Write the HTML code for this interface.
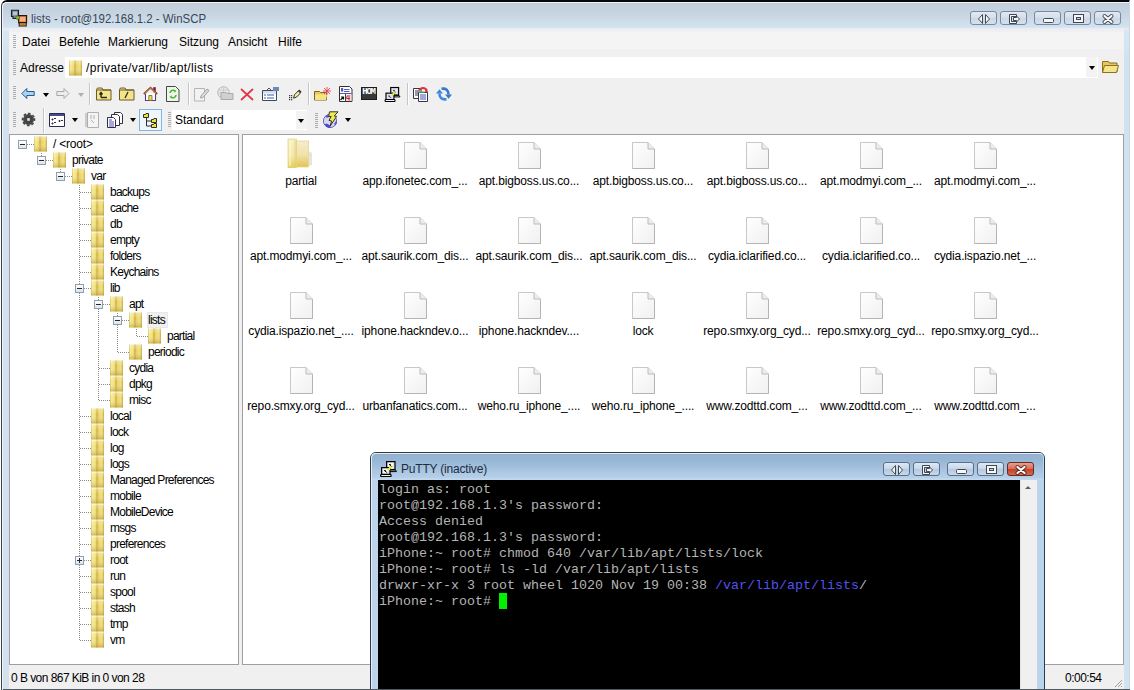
<!DOCTYPE html>
<html><head><meta charset="utf-8">
<style>
*{margin:0;padding:0;box-sizing:border-box}
html,body{width:1134px;height:690px;overflow:hidden;background:#fff;font-family:"Liberation Sans",sans-serif;font-size:12px;color:#000}
.a{position:absolute}
.t{position:absolute;white-space:nowrap;line-height:14px}
#win{position:absolute;left:1px;top:0;width:1129px;height:692px;border:1px solid #39404a;border-top:2px solid #0a0a0a;border-radius:6px 6px 0 0;background:linear-gradient(#c3d0de,#d2e0ee 24px,#cfdded 60px,#cddcec);overflow:hidden}
.grip{position:absolute;width:3px;background:repeating-linear-gradient(#acacac 0 1px,transparent 1px 2px)}
.sep{position:absolute;width:2px;border-left:1px solid #c5c5c5;border-right:1px solid #fff}
.dd{position:absolute;width:0;height:0;border-left:3px solid transparent;border-right:3px solid transparent;border-top:3px solid #000}
.tb{position:absolute;width:27px;height:14px;border:1px solid #7888a0;border-radius:3px;background:linear-gradient(#e2e9f2,#d4deea 50%,#cbd7e5 51%,#d6e1ed)}
.tree .r{position:absolute;height:16px}
.fold{position:absolute;width:13px;height:16px}
.box{position:absolute;width:9px;height:9px;border:1px solid #919eae;background:linear-gradient(#fff,#dfe3e8)}
.plus:before{content:"";position:absolute;left:3px;top:1px;width:1px;height:5px;background:#1c2a3a}
.box:after{content:"";position:absolute;left:1px;top:3px;width:5px;height:1px;background:#1c2a3a}
.vd{position:absolute;width:1px;background:repeating-linear-gradient(#8a8a8a 0 1px,transparent 1px 2px)}
.hd{position:absolute;height:1px;background:repeating-linear-gradient(90deg,#8a8a8a 0 1px,transparent 1px 2px)}
.fi{position:absolute;width:114px;height:75px}
.fi .lb{position:absolute;left:0;width:114px;top:39px;text-align:center;line-height:14px;white-space:nowrap;color:#000}
.term{position:absolute;font-family:"Liberation Mono",monospace;font-size:13.333px;line-height:16px;color:#b4b4b4;white-space:pre}
.tt{letter-spacing:-0.75px}
</style></head><body>
<svg width="0" height="0" style="position:absolute">
<defs>
<linearGradient id="gh" x1="0" x2="1" y1="0" y2="0"><stop offset="0" stop-color="#d4bc50"/><stop offset="0.12" stop-color="#f6ec98"/><stop offset="0.36" stop-color="#eedb70"/><stop offset="0.46" stop-color="#c8a83c"/><stop offset="0.56" stop-color="#e8d264"/><stop offset="0.85" stop-color="#f0e080"/><stop offset="1" stop-color="#c4a238"/></linearGradient>
<linearGradient id="gv" x1="0" x2="0" y1="0" y2="1"><stop offset="0" stop-color="#fff" stop-opacity="0.35"/><stop offset="0.4" stop-color="#fff" stop-opacity="0"/><stop offset="1" stop-color="#a88010" stop-opacity="0.45"/></linearGradient>
<linearGradient id="gf1" x1="0" x2="0" y1="0" y2="1"><stop offset="0" stop-color="#f8f2c8"/><stop offset="0.6" stop-color="#f4e8a8"/><stop offset="1" stop-color="#e6cc58"/></linearGradient>
<linearGradient id="gf2" x1="0" x2="0" y1="0" y2="1"><stop offset="0" stop-color="#f6eccc"/><stop offset="0.55" stop-color="#f0e2a8"/><stop offset="1" stop-color="#e2c450"/></linearGradient>
<linearGradient id="gdoc" x1="0" x2="1" y1="0" y2="1"><stop offset="0" stop-color="#ffffff"/><stop offset="1" stop-color="#f0f0f0"/></linearGradient>
<symbol id="fs" viewBox="0 0 13 15">
<rect x="0" y="0" width="13" height="15" fill="url(#gh)"/>
<rect x="0" y="0" width="13" height="15" fill="url(#gv)"/>
</symbol>
<symbol id="fb" viewBox="0 0 26 30">
<path d="M22 13l3 2v12l-3 1z" fill="#e4e4e4"/>
<path d="M9 3h12.5v26H9z" fill="url(#gf2)" stroke="#e6d48a" stroke-width="0.8"/>
<path d="M1 1h8.5v29H1z" fill="url(#gf1)" stroke="#e4d07c" stroke-width="0.8"/>
<path d="M3 3v25" stroke="#fbf6d8" stroke-width="1.2"/>
<path d="M8 2v27" stroke="#e0c868" stroke-width="0.8"/>
</symbol>
<symbol id="doc" viewBox="0 0 23 27">
<path d="M0.5 0.5h15.5l6.5 6.5v19.5h-22z" fill="url(#gdoc)" stroke="#c8c8c8"/>
<path d="M22.5 7.5v19h-22" fill="none" stroke="#b4b4b4"/>
<path d="M16 0.5v6.5h6.5" fill="#ececec" stroke="#bcbcbc"/>
</symbol>
</defs>
</svg>

<!-- frame -->
<div class="a" style="left:1px;top:0;width:1129px;height:700px;border:1px solid #3a424c;border-right:1px solid #c8d8ea;border-top:2px solid #080808;border-radius:6px 0 0 0;background:#d3e1ef"></div>
<div class="a" style="left:2px;top:2px;width:1127px;height:700px;border:1px solid #eef3f8;border-bottom:0;border-right:0;border-radius:5px 0 0 0;background:linear-gradient(#c5ccd4 0px,#c2cfdd 2px,#c6d4e2 10px,#d3e2ef 24px,#e6edf4 26px,#d9e6f3 28px,#d3e1ef 60px)"></div>
<!-- client -->
<div class="a" style="left:9px;top:29px;width:1115px;height:660px;background:#f0f0f0"></div>
<div class="a" style="left:9px;top:28px;width:1115px;height:2px;background:#e9eef4"></div>
<div class="a" style="left:10px;top:32px;width:1113px;height:17px;background:#f4f4f5"></div>
<!-- bottom border -->
<div class="a" style="left:3px;top:689px;width:1127px;height:1px;background:#4a5058"></div>
<!-- title -->
<div class="t" style="left:31px;top:11px;color:#3a4654;font-size:13px;line-height:16px;transform:scaleX(0.88);transform-origin:0 0">lists - root@192.168.1.2 - WinSCP</div>
<!-- title buttons -->
<div class="tb" style="left:970px;top:11px"></div>
<div class="tb" style="left:1000px;top:11px"></div>
<div class="tb" style="left:1034px;top:11px"></div>
<div class="tb" style="left:1064px;top:11px"></div>
<div class="tb" style="left:1094px;top:11px"></div>
<!-- menu -->
<div class="grip" style="left:13px;top:35px;height:13px"></div>
<div class="t" style="left:22px;top:35px">Datei</div>
<div class="t" style="left:59px;top:35px">Befehle</div>
<div class="t" style="left:108px;top:35px">Markierung</div>
<div class="t" style="left:179px;top:35px">Sitzung</div>
<div class="t" style="left:228px;top:35px">Ansicht</div>
<div class="t" style="left:278px;top:35px">Hilfe</div>
<!-- address -->
<div class="grip" style="left:13px;top:60px;height:15px"></div>
<div class="t" style="left:20px;top:61px">Adresse</div>
<div class="a" style="left:65px;top:57px;width:1033px;height:21px;background:#fff"></div>
<div class="a" style="left:1086px;top:57px;width:11px;height:20px;background:#f3f3f3"></div>
<div class="dd" style="left:1089px;top:66px;border-width:4px 3px 0 3px"></div>
<div class="t" style="left:86px;top:61px;letter-spacing:0.33px">/private/var/lib/apt/lists</div>
<!-- toolbar grips -->
<div class="grip" style="left:13px;top:86px;height:14px"></div>
<div class="grip" style="left:13px;top:112px;height:16px"></div>
<div class="sep" style="left:89px;top:83px;height:22px"></div>
<div class="sep" style="left:188px;top:83px;height:22px"></div>
<div class="sep" style="left:308px;top:83px;height:22px"></div>
<div class="sep" style="left:407px;top:83px;height:22px"></div>
<div class="sep" style="left:43px;top:108px;height:25px"></div>
<div class="dd" style="left:43px;top:93px;border-width:4px 3px 0 3px"></div>
<div class="dd" style="left:78px;top:93px;border-width:4px 3px 0 3px;border-top-color:#b0b0b0"></div>
<div class="dd" style="left:72px;top:118px;border-width:4px 3px 0 3px"></div>
<div class="dd" style="left:130px;top:118px;border-width:4px 3px 0 3px"></div>
<div class="dd" style="left:345px;top:118px;border-width:4px 3px 0 3px"></div>
<div class="a" style="left:139px;top:109px;width:23px;height:22px;border:1px solid #7eb4ea;background:#eef5fb"></div>
<div class="grip" style="left:168px;top:112px;height:16px"></div>
<div class="a" style="left:172px;top:110px;width:135px;height:20px;background:#fff"></div>
<div class="a" style="left:296px;top:111px;width:11px;height:18px;background:#f3f3f3"></div>
<div class="dd" style="left:298px;top:119px;border-width:4px 3px 0 3px"></div>
<div class="t" style="left:175px;top:113px">Standard</div>
<div class="grip" style="left:315px;top:113px;height:16px"></div>
<!-- panels -->
<div class="a" style="left:9px;top:134px;width:230px;height:531px;border:1px solid #9c9fa4;background:#fff"></div>
<div class="a" style="left:242px;top:134px;width:882px;height:531px;border:1px solid #9c9fa4;background:#fff"></div>
<!-- status -->
<div class="t" style="left:11px;top:671px;letter-spacing:-0.55px">0 B von 867 KiB in 0 von 28</div>
<div class="t" style="left:1065px;top:671px;letter-spacing:-0.5px">0:00:54</div>

<div class="vd" style="left:41px;top:153px;height:8px"></div>
<div class="vd" style="left:60px;top:169px;height:8px"></div>
<div class="vd" style="left:79px;top:185px;height:456px"></div>
<div class="vd" style="left:98px;top:297px;height:104px"></div>
<div class="vd" style="left:117px;top:313px;height:40px"></div>
<div class="vd" style="left:136px;top:329px;height:8px"></div>
<div class="hd" style="left:27px;top:144px;width:7px"></div>
<div class="box" style="left:18px;top:140px"></div>
<svg class="fold" style="left:34px;top:136px" width="13" height="15"><use href="#fs"/></svg>
<div class="t tt" style="left:53px;top:137px;letter-spacing:-0.2px">/ &lt;root&gt;</div>
<div class="hd" style="left:46px;top:160px;width:7px"></div>
<div class="box" style="left:37px;top:156px"></div>
<svg class="fold" style="left:53px;top:152px" width="13" height="15"><use href="#fs"/></svg>
<div class="t tt" style="left:72px;top:153px">private</div>
<div class="hd" style="left:65px;top:176px;width:7px"></div>
<div class="box" style="left:56px;top:172px"></div>
<svg class="fold" style="left:72px;top:168px" width="13" height="15"><use href="#fs"/></svg>
<div class="t tt" style="left:91px;top:169px">var</div>
<div class="hd" style="left:80px;top:192px;width:11px"></div>
<svg class="fold" style="left:91px;top:184px" width="13" height="15"><use href="#fs"/></svg>
<div class="t tt" style="left:110px;top:185px">backups</div>
<div class="hd" style="left:80px;top:208px;width:11px"></div>
<svg class="fold" style="left:91px;top:200px" width="13" height="15"><use href="#fs"/></svg>
<div class="t tt" style="left:110px;top:201px">cache</div>
<div class="hd" style="left:80px;top:224px;width:11px"></div>
<svg class="fold" style="left:91px;top:216px" width="13" height="15"><use href="#fs"/></svg>
<div class="t tt" style="left:110px;top:217px">db</div>
<div class="hd" style="left:80px;top:240px;width:11px"></div>
<svg class="fold" style="left:91px;top:232px" width="13" height="15"><use href="#fs"/></svg>
<div class="t tt" style="left:110px;top:233px">empty</div>
<div class="hd" style="left:80px;top:256px;width:11px"></div>
<svg class="fold" style="left:91px;top:248px" width="13" height="15"><use href="#fs"/></svg>
<div class="t tt" style="left:110px;top:249px">folders</div>
<div class="hd" style="left:80px;top:272px;width:11px"></div>
<svg class="fold" style="left:91px;top:264px" width="13" height="15"><use href="#fs"/></svg>
<div class="t tt" style="left:110px;top:265px">Keychains</div>
<div class="hd" style="left:84px;top:288px;width:7px"></div>
<div class="box" style="left:75px;top:284px"></div>
<svg class="fold" style="left:91px;top:280px" width="13" height="15"><use href="#fs"/></svg>
<div class="t tt" style="left:110px;top:281px">lib</div>
<div class="hd" style="left:103px;top:304px;width:7px"></div>
<div class="box" style="left:94px;top:300px"></div>
<svg class="fold" style="left:110px;top:296px" width="13" height="15"><use href="#fs"/></svg>
<div class="t tt" style="left:129px;top:297px">apt</div>
<div class="hd" style="left:122px;top:320px;width:7px"></div>
<div class="box" style="left:113px;top:316px"></div>
<svg class="fold" style="left:129px;top:312px" width="13" height="15"><use href="#fs"/></svg>
<div class="a" style="left:147px;top:312px;width:21px;height:16px;background:#f0f0f0;border:1px solid #e8e8e8"></div>
<div class="t tt" style="left:148px;top:313px">lists</div>
<div class="hd" style="left:137px;top:336px;width:11px"></div>
<svg class="fold" style="left:148px;top:328px" width="13" height="15"><use href="#fs"/></svg>
<div class="t tt" style="left:167px;top:329px">partial</div>
<div class="hd" style="left:118px;top:352px;width:11px"></div>
<svg class="fold" style="left:129px;top:344px" width="13" height="15"><use href="#fs"/></svg>
<div class="t tt" style="left:148px;top:345px">periodic</div>
<div class="hd" style="left:99px;top:368px;width:11px"></div>
<svg class="fold" style="left:110px;top:360px" width="13" height="15"><use href="#fs"/></svg>
<div class="t tt" style="left:129px;top:361px">cydia</div>
<div class="hd" style="left:99px;top:384px;width:11px"></div>
<svg class="fold" style="left:110px;top:376px" width="13" height="15"><use href="#fs"/></svg>
<div class="t tt" style="left:129px;top:377px">dpkg</div>
<div class="hd" style="left:99px;top:400px;width:11px"></div>
<svg class="fold" style="left:110px;top:392px" width="13" height="15"><use href="#fs"/></svg>
<div class="t tt" style="left:129px;top:393px">misc</div>
<div class="hd" style="left:80px;top:416px;width:11px"></div>
<svg class="fold" style="left:91px;top:408px" width="13" height="15"><use href="#fs"/></svg>
<div class="t tt" style="left:110px;top:409px">local</div>
<div class="hd" style="left:80px;top:432px;width:11px"></div>
<svg class="fold" style="left:91px;top:424px" width="13" height="15"><use href="#fs"/></svg>
<div class="t tt" style="left:110px;top:425px">lock</div>
<div class="hd" style="left:80px;top:448px;width:11px"></div>
<svg class="fold" style="left:91px;top:440px" width="13" height="15"><use href="#fs"/></svg>
<div class="t tt" style="left:110px;top:441px">log</div>
<div class="hd" style="left:80px;top:464px;width:11px"></div>
<svg class="fold" style="left:91px;top:456px" width="13" height="15"><use href="#fs"/></svg>
<div class="t tt" style="left:110px;top:457px">logs</div>
<div class="hd" style="left:80px;top:480px;width:11px"></div>
<svg class="fold" style="left:91px;top:472px" width="13" height="15"><use href="#fs"/></svg>
<div class="t tt" style="left:110px;top:473px">Managed Preferences</div>
<div class="hd" style="left:80px;top:496px;width:11px"></div>
<svg class="fold" style="left:91px;top:488px" width="13" height="15"><use href="#fs"/></svg>
<div class="t tt" style="left:110px;top:489px">mobile</div>
<div class="hd" style="left:80px;top:512px;width:11px"></div>
<svg class="fold" style="left:91px;top:504px" width="13" height="15"><use href="#fs"/></svg>
<div class="t tt" style="left:110px;top:505px">MobileDevice</div>
<div class="hd" style="left:80px;top:528px;width:11px"></div>
<svg class="fold" style="left:91px;top:520px" width="13" height="15"><use href="#fs"/></svg>
<div class="t tt" style="left:110px;top:521px">msgs</div>
<div class="hd" style="left:80px;top:544px;width:11px"></div>
<svg class="fold" style="left:91px;top:536px" width="13" height="15"><use href="#fs"/></svg>
<div class="t tt" style="left:110px;top:537px">preferences</div>
<div class="hd" style="left:84px;top:560px;width:7px"></div>
<div class="box plus" style="left:75px;top:556px"></div>
<svg class="fold" style="left:91px;top:552px" width="13" height="15"><use href="#fs"/></svg>
<div class="t tt" style="left:110px;top:553px">root</div>
<div class="hd" style="left:80px;top:576px;width:11px"></div>
<svg class="fold" style="left:91px;top:568px" width="13" height="15"><use href="#fs"/></svg>
<div class="t tt" style="left:110px;top:569px">run</div>
<div class="hd" style="left:80px;top:592px;width:11px"></div>
<svg class="fold" style="left:91px;top:584px" width="13" height="15"><use href="#fs"/></svg>
<div class="t tt" style="left:110px;top:585px">spool</div>
<div class="hd" style="left:80px;top:608px;width:11px"></div>
<svg class="fold" style="left:91px;top:600px" width="13" height="15"><use href="#fs"/></svg>
<div class="t tt" style="left:110px;top:601px">stash</div>
<div class="hd" style="left:80px;top:624px;width:11px"></div>
<svg class="fold" style="left:91px;top:616px" width="13" height="15"><use href="#fs"/></svg>
<div class="t tt" style="left:110px;top:617px">tmp</div>
<div class="hd" style="left:80px;top:640px;width:11px"></div>
<svg class="fold" style="left:91px;top:632px" width="13" height="15"><use href="#fs"/></svg>
<div class="t tt" style="left:110px;top:633px">vm</div>
<svg class="a" style="left:287px;top:138px" width="26" height="30"><use href="#fb"/></svg>
<div class="t" style="left:244px;top:174px;width:114px;text-align:center;letter-spacing:-0.15px">partial</div>
<svg class="a" style="left:404px;top:142px" width="23" height="27"><use href="#doc"/></svg>
<div class="t" style="left:358px;top:174px;width:114px;text-align:center;letter-spacing:-0.15px">app.ifonetec.com_...</div>
<svg class="a" style="left:518px;top:142px" width="23" height="27"><use href="#doc"/></svg>
<div class="t" style="left:472px;top:174px;width:114px;text-align:center;letter-spacing:-0.15px">apt.bigboss.us.co...</div>
<svg class="a" style="left:632px;top:142px" width="23" height="27"><use href="#doc"/></svg>
<div class="t" style="left:586px;top:174px;width:114px;text-align:center;letter-spacing:-0.15px">apt.bigboss.us.co...</div>
<svg class="a" style="left:746px;top:142px" width="23" height="27"><use href="#doc"/></svg>
<div class="t" style="left:700px;top:174px;width:114px;text-align:center;letter-spacing:-0.15px">apt.bigboss.us.co...</div>
<svg class="a" style="left:860px;top:142px" width="23" height="27"><use href="#doc"/></svg>
<div class="t" style="left:814px;top:174px;width:114px;text-align:center;letter-spacing:-0.15px">apt.modmyi.com_...</div>
<svg class="a" style="left:974px;top:142px" width="23" height="27"><use href="#doc"/></svg>
<div class="t" style="left:928px;top:174px;width:114px;text-align:center;letter-spacing:-0.15px">apt.modmyi.com_...</div>
<svg class="a" style="left:290px;top:217px" width="23" height="27"><use href="#doc"/></svg>
<div class="t" style="left:244px;top:249px;width:114px;text-align:center;letter-spacing:-0.15px">apt.modmyi.com_...</div>
<svg class="a" style="left:404px;top:217px" width="23" height="27"><use href="#doc"/></svg>
<div class="t" style="left:358px;top:249px;width:114px;text-align:center;letter-spacing:-0.15px">apt.saurik.com_dis...</div>
<svg class="a" style="left:518px;top:217px" width="23" height="27"><use href="#doc"/></svg>
<div class="t" style="left:472px;top:249px;width:114px;text-align:center;letter-spacing:-0.15px">apt.saurik.com_dis...</div>
<svg class="a" style="left:632px;top:217px" width="23" height="27"><use href="#doc"/></svg>
<div class="t" style="left:586px;top:249px;width:114px;text-align:center;letter-spacing:-0.15px">apt.saurik.com_dis...</div>
<svg class="a" style="left:746px;top:217px" width="23" height="27"><use href="#doc"/></svg>
<div class="t" style="left:700px;top:249px;width:114px;text-align:center;letter-spacing:-0.15px">cydia.iclarified.co...</div>
<svg class="a" style="left:860px;top:217px" width="23" height="27"><use href="#doc"/></svg>
<div class="t" style="left:814px;top:249px;width:114px;text-align:center;letter-spacing:-0.15px">cydia.iclarified.co...</div>
<svg class="a" style="left:974px;top:217px" width="23" height="27"><use href="#doc"/></svg>
<div class="t" style="left:928px;top:249px;width:114px;text-align:center;letter-spacing:-0.15px">cydia.ispazio.net_...</div>
<svg class="a" style="left:290px;top:292px" width="23" height="27"><use href="#doc"/></svg>
<div class="t" style="left:244px;top:324px;width:114px;text-align:center;letter-spacing:-0.15px">cydia.ispazio.net_....</div>
<svg class="a" style="left:404px;top:292px" width="23" height="27"><use href="#doc"/></svg>
<div class="t" style="left:358px;top:324px;width:114px;text-align:center;letter-spacing:-0.15px">iphone.hackndev.o...</div>
<svg class="a" style="left:518px;top:292px" width="23" height="27"><use href="#doc"/></svg>
<div class="t" style="left:472px;top:324px;width:114px;text-align:center;letter-spacing:-0.15px">iphone.hackndev....</div>
<svg class="a" style="left:632px;top:292px" width="23" height="27"><use href="#doc"/></svg>
<div class="t" style="left:586px;top:324px;width:114px;text-align:center;letter-spacing:-0.15px">lock</div>
<svg class="a" style="left:746px;top:292px" width="23" height="27"><use href="#doc"/></svg>
<div class="t" style="left:700px;top:324px;width:114px;text-align:center;letter-spacing:-0.15px">repo.smxy.org_cyd...</div>
<svg class="a" style="left:860px;top:292px" width="23" height="27"><use href="#doc"/></svg>
<div class="t" style="left:814px;top:324px;width:114px;text-align:center;letter-spacing:-0.15px">repo.smxy.org_cyd...</div>
<svg class="a" style="left:974px;top:292px" width="23" height="27"><use href="#doc"/></svg>
<div class="t" style="left:928px;top:324px;width:114px;text-align:center;letter-spacing:-0.15px">repo.smxy.org_cyd...</div>
<svg class="a" style="left:290px;top:367px" width="23" height="27"><use href="#doc"/></svg>
<div class="t" style="left:244px;top:399px;width:114px;text-align:center;letter-spacing:-0.15px">repo.smxy.org_cyd...</div>
<svg class="a" style="left:404px;top:367px" width="23" height="27"><use href="#doc"/></svg>
<div class="t" style="left:358px;top:399px;width:114px;text-align:center;letter-spacing:-0.15px">urbanfanatics.com...</div>
<svg class="a" style="left:518px;top:367px" width="23" height="27"><use href="#doc"/></svg>
<div class="t" style="left:472px;top:399px;width:114px;text-align:center;letter-spacing:-0.15px">weho.ru_iphone_....</div>
<svg class="a" style="left:632px;top:367px" width="23" height="27"><use href="#doc"/></svg>
<div class="t" style="left:586px;top:399px;width:114px;text-align:center;letter-spacing:-0.15px">weho.ru_iphone_....</div>
<svg class="a" style="left:746px;top:367px" width="23" height="27"><use href="#doc"/></svg>
<div class="t" style="left:700px;top:399px;width:114px;text-align:center;letter-spacing:-0.15px">www.zodttd.com_...</div>
<svg class="a" style="left:860px;top:367px" width="23" height="27"><use href="#doc"/></svg>
<div class="t" style="left:814px;top:399px;width:114px;text-align:center;letter-spacing:-0.15px">www.zodttd.com_...</div>
<svg class="a" style="left:974px;top:367px" width="23" height="27"><use href="#doc"/></svg>
<div class="t" style="left:928px;top:399px;width:114px;text-align:center;letter-spacing:-0.15px">www.zodttd.com_...</div>
<!-- winscp title icon -->
<svg class="a" style="left:10px;top:9px" width="18" height="18" viewBox="0 0 18 18">
<path d="M1.5 1.2h7v6.3h-1.5v2h-4v-2H1.5z" fill="#7a8694" stroke="#18202a" stroke-width="1.1"/>
<path d="M3 2.6h4v3.6H3z" fill="#b8c4d0"/>
<path d="M8.6 6.6h8v7h-8z" fill="#e88848" stroke="#2a1406" stroke-width="1.1"/>
<path d="M10 8h5v4.2h-5z" fill="#f4b088"/>
<path d="M9.2 13.6h7v3.4h-7z" fill="#eeb048" stroke="#2a1406" stroke-width="1.1"/>
<path d="M10.5 15.2h4.4" stroke="#8a5010" stroke-width=".8"/>
<circle cx="7.6" cy="8.6" r="1.9" fill="#88b830" stroke="#2a4010" stroke-width=".5"/>
</svg>
<!-- title button glyphs -->
<svg class="a" style="left:970px;top:11px" width="28" height="16" viewBox="0 0 28 16">
<path d="M12.5 3.5l-4 4.5 4 4.5z M15.5 3.5l4 4.5-4 4.5z" fill="#f4f6f8" stroke="#404854"/></svg>
<svg class="a" style="left:1000px;top:11px" width="28" height="16" viewBox="0 0 28 16">
<path d="M9.5 3.5h7v2h-5v5h5v2h-7z" fill="#f4f6f8" stroke="#404854"/><path d="M13.5 6.5h3v-1.5l3 3-3 3v-1.5h-3z" fill="#f4f6f8" stroke="#404854"/></svg>
<svg class="a" style="left:1034px;top:11px" width="28" height="16" viewBox="0 0 28 16">
<rect x="9.5" y="7.5" width="10" height="4" rx="1" fill="#f4f6f8" stroke="#404854"/></svg>
<svg class="a" style="left:1064px;top:11px" width="28" height="16" viewBox="0 0 28 16">
<rect x="9.5" y="3.5" width="10" height="8" fill="#f4f6f8" stroke="#404854"/><rect x="12.5" y="6.5" width="4" height="2" fill="#c8d4e2" stroke="#404854"/></svg>
<svg class="a" style="left:1094px;top:11px" width="28" height="16" viewBox="0 0 28 16">
<path d="M10.5 5l7 6M17.5 5l-7 6" stroke="#404854" stroke-width="4" stroke-linecap="round"/><path d="M10.5 5l7 6M17.5 5l-7 6" stroke="#f8f9fa" stroke-width="2.2" stroke-linecap="round"/></svg>
<!-- address folder -->
<svg class="a" style="left:69px;top:60px" width="13" height="16"><use href="#fs"/></svg>
<!-- address right folder -->
<svg class="a" style="left:1102px;top:59px" width="17" height="14" viewBox="0 0 17 14">
<path d="M0.5 2.5h6l1 1.5h7.5v9h-14.5z" fill="#e7c75a" stroke="#8a7020"/>
<path d="M2.5 6.5h14l-2 7h-14z" fill="#f7e48a" stroke="#8a7020"/></svg>
<!-- back arrow -->
<svg class="a" style="left:21px;top:88px" width="14" height="12" viewBox="0 0 14 12">
<path d="M0.8 5.5l5-5v3h7.4v4h-7.4v3z" fill="#a7d3f4" stroke="#2a5b8c" stroke-linejoin="round"/></svg>
<svg class="a" style="left:56px;top:88px" width="14" height="12" viewBox="0 0 14 12">
<path d="M13 5.5l-5-5v3H0.8v4h7.2v3z" fill="#ececec" stroke="#a8a8a8" stroke-linejoin="round"/></svg>
<!-- parent folder -->
<svg class="a" style="left:96px;top:87px" width="16" height="14" viewBox="0 0 16 14">
<path d="M0.5 2.5v10.5h14.5v-10h-8l-1-2h-4.5z" fill="#f3e48c" stroke="#6a5a28"/>
<path d="M1 3h14" stroke="#6a5a28"/>
<path d="M5 10.5h6M5 10.5v-4.5M3.5 7.5l1.5-2 1.5 2" fill="none" stroke="#2a2a10" stroke-width="1.4"/></svg>
<svg class="a" style="left:119px;top:87px" width="16" height="14" viewBox="0 0 16 14">
<path d="M0.5 2.5v10.5h14.5v-10h-8l-1-2h-4.5z" fill="#f3e48c" stroke="#6a5a28"/>
<path d="M1 3h14" stroke="#6a5a28"/>
<path d="M6 11l3-6" stroke="#2a2a10" stroke-width="1.3"/></svg>
<!-- home -->
<svg class="a" style="left:143px;top:86px" width="15" height="15" viewBox="0 0 15 15">
<path d="M10.2 1.2h2.6v5h-2.6z" fill="#8a1848"/>
<path d="M2.5 7.5v7h10v-7" fill="#fff" stroke="#5a3a7a" stroke-width="1.1"/>
<path d="M0.8 8l6.7-6.3 6.7 6.3" fill="none" stroke="#8a5028" stroke-width="1.9"/>
<path d="M1.8 7.6l5.7-5.3 5.7 5.3" fill="none" stroke="#f0c890" stroke-width=".6"/>
<path d="M5.8 9.5h3.2v5H5.8z" fill="#e8d860" stroke="#6a6a20" stroke-width=".8"/></svg>
<!-- refresh doc -->
<svg class="a" style="left:166px;top:86px" width="14" height="16" viewBox="0 0 14 16">
<path d="M0.5 0.5h9l3.5 3.5v11.5h-12.5z" fill="#eef6e6" stroke="#404848"/>
<path d="M4 7a3 3 0 0 1 5-2M10 9a3 3 0 0 1-5 2" fill="none" stroke="#50b040" stroke-width="1.6"/>
<path d="M8 3.5l2.5 1.5-2 1.8zM6 12.5l-2.5-1.5 2-1.8z" fill="#50b040"/></svg>
<!-- edit grey -->
<svg class="a" style="left:194px;top:86px" width="16" height="16" viewBox="0 0 16 16">
<path d="M0.5 2.5h10v12.5h-10z" fill="#f2f2f2" stroke="#b4b4b4"/>
<path d="M7 10l6-7 2 1.5-6 7-2.5 0.5z" fill="#e0e0e0" stroke="#a0a0a0"/></svg>
<!-- open grey -->
<svg class="a" style="left:217px;top:86px" width="17" height="14" viewBox="0 0 17 14">
<circle cx="6.5" cy="6.5" r="5.8" fill="#e6e6e6" stroke="#b8b8b8"/>
<path d="M2 4h9M1.2 7h10.6M6.5 0.8v11.4" stroke="#c8c8c8" stroke-width=".8"/>
<path d="M4 6.5h5l1 1h6v6h-12z" fill="#d0d0d0" stroke="#aaaaaa"/></svg>
<!-- delete -->
<svg class="a" style="left:240px;top:88px" width="14" height="13" viewBox="0 0 14 13">
<path d="M1 1l12 11M13 1L1 12" stroke="#e0384a" stroke-width="1.8"/></svg>
<!-- properties -->
<svg class="a" style="left:262px;top:86px" width="18" height="15" viewBox="0 0 18 15">
<path d="M0.5 4.5h14v10h-14z" fill="#fff" stroke="#404858"/>
<path d="M1 5h13v2.5H1z" fill="#d8dde8"/>
<path d="M2 9h2M5 9h7M2 12h2M5 12h7" stroke="#3060c0" stroke-width="1.2"/>
<path d="M4 5l3-3 3 3 3-3" fill="none" stroke="#405070"/>
<path d="M11 1h6v4h-6z" fill="#6a8ab8"/></svg>
<!-- rename -->
<svg class="a" style="left:288px;top:88px" width="14" height="13" viewBox="0 0 14 13">
<path d="M1 7h1.2v1.2H1zM3 7h1.2v1.2H3zM1 9h1.2v1.2H1zM3 9h1.2v1.2H3zM1 11h1.2v1.2H1zM3 11h1.2v1.2H3z" fill="#383838"/>
<path d="M5.6 10.2l0.9-3.4 4-4.2 2.2 2.1-4 4.3z" fill="#f6eeb0" stroke="#202010" stroke-width=".9" stroke-linejoin="round"/>
<path d="M9.8 3.2l1.6-1.6 2.2 2.1-1.6 1.6z" fill="#484040"/></svg>
<!-- new folder -->
<svg class="a" style="left:314px;top:86px" width="18" height="15" viewBox="0 0 18 15">
<path d="M0.5 5.5h5l1 1h6v7.5h-12z" fill="#e8cb58" stroke="#7a6420"/>
<path d="M1 8.5h12l-1 5.5H1z" fill="#f5e38a"/>
<path d="M13 1v8M9 5h8M10 2l6 6M16 2l-6 6" stroke="#e84050" stroke-width=".9"/></svg>
<!-- compare -->
<svg class="a" style="left:338px;top:86px" width="15" height="16" viewBox="0 0 15 16">
<path d="M1.5 0.5h10l2.5 2.5v12.5h-12.5z" fill="#fff" stroke="#303038"/>
<rect x="3" y="2" width="2.2" height="3.6" fill="#5058b0"/><path d="M6 3.5h5.5M6 5.5h5.5" stroke="#5060c8" stroke-width="1.1"/>
<path d="M2 7.5h11.5" stroke="#5058b8"/><path d="M7.5 8v7" stroke="#404048"/>
<rect x="8" y="8.5" width="5.5" height="6.5" fill="#f4d8d8"/><path d="M9.5 9.5l-1 3h3.5M11 9v5.5" fill="none" stroke="#c03040" stroke-width="1"/>
<path d="M2.5 14l3-3M3 11h2.5v2.5" fill="none" stroke="#101010" stroke-width="1.2"/></svg>
<!-- HOM -->
<div class="a" style="left:361px;top:87px;width:16px;height:13px;background:#383838;border:1px solid #1c1c1c"></div>
<div class="a" style="left:361px;top:88px;width:16px;height:9px;font-family:'Liberation Mono',monospace;font-weight:bold;font-size:9px;line-height:9px;color:#fff;text-align:center;letter-spacing:-1.3px;text-indent:-1px">HOM</div>
<!-- putty icon tb -->
<svg class="a" style="left:384px;top:86px" width="17" height="16" viewBox="0 0 17 17">
<rect x="6.6" y="1.6" width="8.4" height="8" fill="#dcdce0" stroke="#000" stroke-width="1.2"/>
<rect x="8.2" y="3.2" width="5.2" height="4.6" fill="#e8eaf8"/><path d="M9 4.5h1.5v1.5M11 6.5h1.2" stroke="#3040a0" stroke-width="1"/>
<path d="M8 10h7.5l1 1.6h-8.5z" fill="#c8c8b8" stroke="#000" stroke-width="1"/>
<rect x="1.6" y="7.6" width="8.4" height="7.4" fill="#dcdce0" stroke="#000" stroke-width="1.2"/>
<rect x="3.2" y="9.2" width="5.2" height="4" fill="#e8eaf8"/><path d="M4 10.5h1.5v1.5M6 12.2h1.2" stroke="#3040a0" stroke-width="1"/>
<rect x="0.6" y="14.4" width="10.6" height="2.2" rx="1" fill="#f2f2ea" stroke="#000" stroke-width="1.1"/>
<path d="M7 10.5l2.5-4.2 2.5-0.8-2 4.4z" fill="#e4f020"/></svg>
<!-- sync -->
<svg class="a" style="left:413px;top:86px" width="16" height="16" viewBox="0 0 16 16">
<path d="M0.5 2.5h7.5v10h-7.5z" fill="#fff" stroke="#303848"/><path d="M2 5h4.5M2 7h4.5M2 9h4.5" stroke="#303050"/>
<path d="M5.5 6.5h9v9h-9z" fill="#fff" stroke="#303848"/><path d="M7 9h6M7 11h6M7 13h6" stroke="#4050b8"/>
<path d="M6 4.5c2-3.5 6-3.5 8 0" fill="none" stroke="#e03040" stroke-width="2"/><path d="M12.5 3l3 2.5-3.5 1z" fill="#e03040"/>
<path d="M6 6.2h5.5" stroke="#38b040" stroke-width="1.4"/></svg>
<!-- refresh blue -->
<svg class="a" style="left:436px;top:87px" width="16" height="14" viewBox="0 0 16 14">
<path d="M5.5 1.8Q12.3 0.8 12.6 7.5" stroke="#3b78c8" stroke-width="2.6" fill="none"/>
<path d="M9 7.5h7l-3.4 4.2z" fill="#3b78c8"/>
<path d="M10.5 12.2Q3.7 13.2 3.4 6.5" stroke="#3f86dc" stroke-width="2.6" fill="none"/>
<path d="M0 6.5h7l-3.6-4.2z" fill="#3f86dc"/></svg>
<!-- gear -->
<svg class="a" style="left:21px;top:112px" width="15" height="15" viewBox="0 0 15 15">
<circle cx="7.5" cy="7.5" r="5.4" fill="#444"/>
<circle cx="7.5" cy="7.5" r="6" fill="none" stroke="#444" stroke-width="1.6" stroke-dasharray="2.6 2.11" transform="rotate(-12 7.5 7.5)"/>
<rect x="6.2" y="6.2" width="2.6" height="2.6" fill="#e8e8e8"/></svg>
<!-- window icon -->
<svg class="a" style="left:49px;top:113px" width="16" height="14" viewBox="0 0 16 14">
<path d="M0.5 0.5h15v13h-15z" fill="#fff" stroke="#2a2a4a"/><path d="M1 1h14v2H1z" fill="#4a4a8a"/>
<path d="M3 6h1v1H3zM5 5.5h2M10 7.5h1v1h-1zM12 7.5h2M3 10h1v1H3zM5 9.5h2" stroke="#303040"/></svg>
<!-- grey notebook -->
<svg class="a" style="left:85px;top:112px" width="14" height="16" viewBox="0 0 14 16">
<path d="M2.5 0.5h11v15h-11z" fill="#f4f4f4" stroke="#b0b0b0"/>
<path d="M0 2h3M0 4h3M0 6h3M0 8h3M0 10h3M0 12h3M0 14h3" stroke="#a8a8a8"/>
<path d="M6 3v4M9 3v4M6 8l3 3" stroke="#b0b0b0"/></svg>
<!-- copy docs -->
<svg class="a" style="left:107px;top:112px" width="16" height="16" viewBox="0 0 16 16">
<path d="M7.5 0.5h6l2 2v9h-8z" fill="#fff" stroke="#303040"/>
<path d="M4.5 2.5h6l2 2v9h-8z" fill="#fff" stroke="#303040"/>
<path d="M0.5 5.5h6l2 2v8h-8z" fill="#fff" stroke="#303040"/>
<path d="M2 8h3M2 10h5M2 12h5M2 14h5" stroke="#5050c0"/></svg>
<!-- tree icon -->
<svg class="a" style="left:143px;top:113px" width="15" height="15" viewBox="0 0 15 15">
<path d="M0.5 1.5h2l.5-1h2.5v4h-5z" fill="#f0e040" stroke="#303020"/>
<path d="M8.5 6.5h2l.5-1h2.5v4h-5z" fill="#f0e040" stroke="#303020"/>
<path d="M8.5 11.5h2l.5-1h2.5v4h-5z" fill="#f0e040" stroke="#303020"/>
<path d="M3.5 5v8h5M3.5 8h5" fill="none" stroke="#303030"/></svg>
<!-- lightning globe -->
<svg class="a" style="left:322px;top:111px" width="17" height="18" viewBox="0 0 17 18">
<circle cx="8" cy="10" r="6.6" fill="#d8d8f0" stroke="#6868a8" stroke-width="1"/>
<path d="M2.5 13.5a7 7 0 0 0 6 3.5l-1-3-3-1.5z" fill="#4848d0"/><path d="M3 5.5l2.5-2 1.5 2-2 1.5z" fill="#5858d8"/>
<path d="M12 13l2-3 1 2-1.5 2.5z" fill="#5858d0"/>
<path d="M7.5 0.8h8.5l-3.8 4.2 2.4 0.4-6.6 10 1.6-5.4-2.6-0.6 2.2-4-2.6 0.4z" fill="#f0ec50" stroke="#202020" stroke-width=".9" stroke-linejoin="round"/></svg>
<!-- putty status sizegrip -->
<svg class="a" style="left:1112px;top:677px" width="11" height="11" viewBox="0 0 11 11">
<path d="M10 3L3 10M10 6L6 10M10 9L9 10" stroke="#a0a0a0" stroke-width="1"/></svg>

<!-- PuTTY window -->
<div class="a" style="left:370px;top:452px;width:675px;height:260px;border:1px solid #2e3a48;border-radius:6px 6px 0 0;background:#bcd3ea"></div>
<div class="a" style="left:371px;top:453px;width:673px;height:260px;border:1px solid #e4eef8;border-right-color:#a8dcf8;border-bottom:0;border-radius:5px 5px 0 0;background:linear-gradient(#9aabbe 0px,#95b3d3 1.5px,#97b7d7 7px,#b6d0e8 24px,#c6dcf0 25px,#bcd3ea 26px)"></div>
<div class="a" style="left:378px;top:480px;width:642px;height:210px;background:#000"></div>
<div class="a" style="left:1020px;top:480px;width:17px;height:210px;background:#f0f0f0;border-left:1px solid #e4e4e4"></div>
<div class="a" style="left:1025px;top:486px;width:0;height:0;border-left:3px solid transparent;border-right:3px solid transparent;border-bottom:3px solid #606060"></div>
<svg class="a" style="left:380px;top:460px" width="17" height="17" viewBox="0 0 17 17">
<rect x="6.6" y="1.6" width="8.4" height="8" fill="#dcdce0" stroke="#000" stroke-width="1.2"/>
<rect x="8.2" y="3.2" width="5.2" height="4.6" fill="#fafafa"/><path d="M9 4.5h1.5v1.5M11 6.5h1.2" stroke="#111" stroke-width="1"/>
<path d="M8 10h7.5l1 1.6h-8.5z" fill="#c8c8b8" stroke="#000" stroke-width="1"/>
<rect x="1.6" y="7.6" width="8.4" height="7.4" fill="#dcdce0" stroke="#000" stroke-width="1.2"/>
<rect x="3.2" y="9.2" width="5.2" height="4" fill="#fafafa"/><path d="M4 10.5h1.5v1.5M6 12.2h1.2" stroke="#111" stroke-width="1"/>
<rect x="0.6" y="14.4" width="10.6" height="2.2" rx="1" fill="#f2f2ea" stroke="#000" stroke-width="1.1"/>
<path d="M7 10.5l2.5-4.2 2.5-0.8-2 4.4z" fill="#e4f020"/></svg>
<div class="t" style="left:401px;top:462px;color:#1e2c40;font-size:12px;letter-spacing:-0.2px">PuTTY (inactive)</div>
<div class="tb" style="left:883px;top:462px;border-color:#5a6e88;background:linear-gradient(#dfe9f4,#c6d6e8 50%,#b4c8de 51%,#c8d8ea)"></div>
<div class="tb" style="left:913px;top:462px;border-color:#5a6e88;background:linear-gradient(#dfe9f4,#c6d6e8 50%,#b4c8de 51%,#c8d8ea)"></div>
<div class="tb" style="left:947px;top:462px;border-color:#5a6e88;background:linear-gradient(#dfe9f4,#c6d6e8 50%,#b4c8de 51%,#c8d8ea)"></div>
<div class="tb" style="left:977px;top:462px;border-color:#5a6e88;background:linear-gradient(#dfe9f4,#c6d6e8 50%,#b4c8de 51%,#c8d8ea)"></div>
<div class="tb" style="left:1007px;top:462px;border-color:#6a2a20;background:linear-gradient(#e8a090,#d86a54 50%,#c4402a 51%,#d86850)"></div>
<svg class="a" style="left:883px;top:462px" width="28" height="16" viewBox="0 0 28 16">
<path d="M12.5 3.5l-4 4.5 4 4.5z M15.5 3.5l4 4.5-4 4.5z" fill="#f4f6f8" stroke="#404854"/></svg>
<svg class="a" style="left:913px;top:462px" width="28" height="16" viewBox="0 0 28 16">
<path d="M9.5 3.5h7v2h-5v5h5v2h-7z" fill="#f4f6f8" stroke="#404854"/><path d="M13.5 6.5h3v-1.5l3 3-3 3v-1.5h-3z" fill="#f4f6f8" stroke="#404854"/></svg>
<svg class="a" style="left:947px;top:462px" width="28" height="16" viewBox="0 0 28 16">
<rect x="9.5" y="7.5" width="10" height="4" rx="1" fill="#f4f6f8" stroke="#404854"/></svg>
<svg class="a" style="left:977px;top:462px" width="28" height="16" viewBox="0 0 28 16">
<rect x="9.5" y="3.5" width="10" height="8" fill="#f4f6f8" stroke="#404854"/><rect x="12.5" y="6.5" width="4" height="2" fill="#c8d4e2" stroke="#404854"/></svg>
<svg class="a" style="left:1007px;top:462px" width="28" height="16" viewBox="0 0 28 16">
<path d="M10.5 5l7 6M17.5 5l-7 6" stroke="#5a2418" stroke-width="4" stroke-linecap="round"/><path d="M10.5 5l7 6M17.5 5l-7 6" stroke="#fff" stroke-width="2.2" stroke-linecap="round"/></svg>
<div class="a" style="left:499px;top:593px;width:8px;height:16px;background:#00f000"></div>
<div class="term" style="left:379px;top:482px">login as: root
root@192.168.1.3's password:
Access denied
root@192.168.1.3's password:
iPhone:~ root# chmod 640 /var/lib/apt/lists/lock
iPhone:~ root# ls -ld /var/lib/apt/lists
drwxr-xr-x 3 root wheel 1020 Nov 19 00:38 <span style="color:#5252f0">/var/lib/apt/lists</span>/
iPhone:~ root# </div>

<div class="a" style="left:4px;top:689px;width:1126px;height:1px;background:#505860"></div>

</body></html>
